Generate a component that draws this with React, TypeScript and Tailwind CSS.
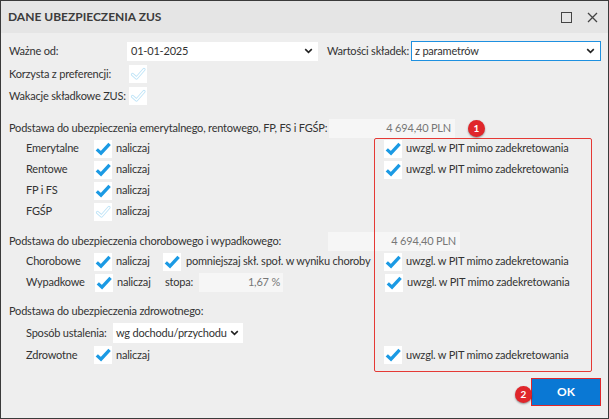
import React from "react";

const Check = ({ faded = false }: { faded?: boolean }) => (
  <span className="inline-flex h-[18px] w-[18px] shrink-0 items-center justify-center bg-white">
    {faded ? (
      <svg width="18" height="18" viewBox="0 0 18 18">
        <path d="M3.5 9.5 L7.5 13 L15 4.5" fill="none" stroke="#bfe4f7" strokeWidth="3.2" strokeLinejoin="round" strokeLinecap="round" />
        <path d="M3.5 9.5 L7.5 13 L15 4.5" fill="none" stroke="#ffffff" strokeWidth="1.4" strokeLinejoin="round" strokeLinecap="round" />
      </svg>
    ) : (
      <svg width="18" height="18" viewBox="0 0 18 18">
        <path d="M2.8 9.4 L7 13.2 L15.6 3.8" fill="none" stroke="#1b9ae4" strokeWidth="3.3" strokeLinejoin="miter" strokeLinecap="butt" />
      </svg>
    )}
  </span>
);

const Chevron = () => (
  <svg width="9" height="6" viewBox="0 0 9 6" className="shrink-0">
    <path d="M1.2 1.2 L4.5 4.3 L7.8 1.2" fill="none" stroke="#222" strokeWidth="1.6" />
  </svg>
);

const Badge = ({ n, className }: { n: string; className: string }) => (
  <div className={`absolute flex h-[17px] w-[17px] items-center justify-center rounded-full bg-[#e0262b] text-[10px] font-bold tracking-normal text-white shadow-[0_1px_2px_rgba(0,0,0,0.4)] ${className}`}>
    {n}
  </div>
);

const PitCheck = () => (
  <div className="flex shrink-0 items-center gap-[4px] whitespace-nowrap">
    <Check />
    <span>uwzgl. w PIT mimo zadekretowania</span>
  </div>
);

const Row = ({ children, h = "h-[21px]" }: { children: React.ReactNode; h?: string }) => (
  <div className={`flex ${h} items-center whitespace-nowrap`}>{children}</div>
);

export default function App() {
  return (
    <div
      className="relative h-[419px] w-[609px] overflow-hidden border border-[#3a3a3a] bg-[#eeeeee] text-[11px] tracking-[-0.2px] text-[#333333]"
      style={{ fontFamily: 'Lato, "Noto Sans", sans-serif' }}
    >
      {/* title bar */}
      <div className="flex h-[32px] items-center justify-between bg-[#e5e5e5] pl-[7px] pr-[10px]">
        <span className="text-[12px] font-bold tracking-normal text-[#3c3c3c]">DANE UBEZPIECZENIA ZUS</span>
        <div className="flex items-center gap-[15px]">
          <span className="h-[11px] w-[11px] border border-[#444]" />
          <svg width="11" height="11" viewBox="0 0 11 11">
            <path d="M1 1 L10 10 M10 1 L1 10" stroke="#444" strokeWidth="1.3" />
          </svg>
        </div>
      </div>

      <div className="flex flex-col pl-[8px] pr-[6px] pt-[8px]">
        {/* row 1 */}
        <div className="flex h-[20px] items-center whitespace-nowrap">
          <span className="w-[118px] shrink-0">Ważne od:</span>
          <div className="flex h-[19px] w-[191px] shrink-0 items-center justify-between bg-white pl-[4px] pr-[5px]">
            <span>01-01-2025</span>
            <Chevron />
          </div>
          <span className="ml-[9px] w-[84px] shrink-0">Wartości składek:</span>
          <div className="flex h-[20px] w-[190px] shrink-0 items-center justify-between border border-[#1e90e0] bg-white pl-[3px] pr-[5px]">
            <span>z parametrów</span>
            <Chevron />
          </div>
        </div>
        <Row h="h-[22px] mt-[2px]">
          <span className="w-[120px] shrink-0">Korzysta z preferencji:</span>
          <Check faded />
        </Row>
        <Row h="h-[22px]">
          <span className="w-[120px] shrink-0">Wakacje składkowe ZUS:</span>
          <Check faded />
        </Row>

        {/* section 1 */}
        <Row h="h-[20px] mt-[11px]">
          <span className="w-[320px] shrink-0">Podstawa do ubezpieczenia emerytalnego, rentowego, FP, FS i FGŚP:</span>
          <div className="flex h-[19px] w-[126px] shrink-0 items-center justify-end bg-[#f6f6f6] pr-[4px] text-[#777]">4 694,40 PLN</div>
        </Row>
        {[
          ["Emerytalne", false, true],
          ["Rentowe", false, true],
          ["FP i FS", false, false],
          ["FGŚP", true, false],
        ].map(([label, faded, pit]) => (
          <Row key={label as string}>
            <span className="ml-[17px] w-[68px] shrink-0">{label as string}</span>
            <Check faded={faded as boolean} />
            <span className="ml-[4px] w-[268px] shrink-0">naliczaj</span>
            {pit ? <PitCheck /> : null}
          </Row>
        ))}

        {/* section 2 */}
        <Row h="h-[20px] mt-[9px]">
          <span className="w-[319px] shrink-0">Podstawa do ubezpieczenia chorobowego i wypadkowego:</span>
          <div className="flex h-[19px] w-[132px] shrink-0 items-center justify-end bg-[#f6f6f6] pr-[4px] text-[#777]">4 694,40 PLN</div>
        </Row>
        <Row>
          <span className="ml-[17px] w-[68px] shrink-0">Chorobowe</span>
          <Check />
          <span className="ml-[4px] w-[47px] shrink-0">naliczaj</span>
          <Check />
          <span className="ml-[5px] w-[198px] shrink-0">pomniejszaj skł. społ. w wyniku choroby</span>
          <PitCheck />
        </Row>
        <Row>
          <span className="ml-[17px] w-[69px] shrink-0">Wypadkowe</span>
          <Check />
          <span className="ml-[4px] w-[48px] shrink-0">naliczaj</span>
          <span className="w-[34px] shrink-0">stopa:</span>
          <div className="flex h-[19px] w-[84px] shrink-0 items-center justify-end bg-[#f6f6f6] pr-[3px] text-[#777]">1,67 %</div>
          <div className="ml-[102px]">
            <PitCheck />
          </div>
        </Row>

        {/* section 3 */}
        <Row h="h-[20px] mt-[8px]">
          <span>Podstawa do ubezpieczenia zdrowotnego:</span>
        </Row>
        <Row h="h-[22px] mt-[1px]">
          <span className="ml-[17px] w-[87px] shrink-0">Sposób ustalenia:</span>
          <div className="flex h-[20px] w-[130px] shrink-0 items-center justify-between bg-white pl-[3px] pr-[4px]">
            <span>wg dochodu/przychodu</span>
            <Chevron />
          </div>
        </Row>
        <Row h="h-[22px]">
          <span className="ml-[17px] w-[68px] shrink-0">Zdrowotne</span>
          <Check />
          <span className="ml-[4px] w-[268px] shrink-0">naliczaj</span>
          <PitCheck />
        </Row>

        <div className="mt-[12px] flex justify-end pr-[1px]">
          <div className="flex h-[28px] w-[70px] items-center justify-center border border-[#e0262b] bg-[#0a78d4] text-[12px] font-bold tracking-normal text-white">
            OK
          </div>
        </div>
      </div>

      {/* annotations */}
      <div className="pointer-events-none absolute left-[373px] top-[137px] h-[234px] w-[218px] rounded-[2px] border border-[#e53935]" />
      <Badge n="1" className="left-[467px] top-[119px]" />
      <Badge n="2" className="left-[514px] top-[385px]" />
    </div>
  );
}
